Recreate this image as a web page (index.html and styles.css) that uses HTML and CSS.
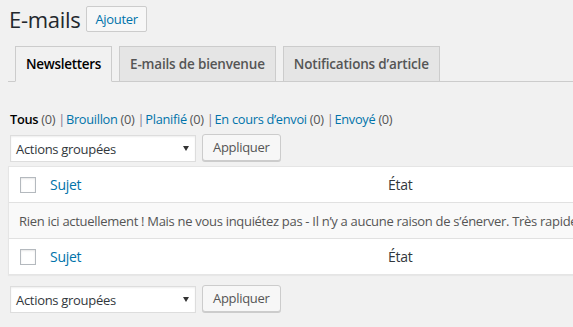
FILE: index.html
```html
<!DOCTYPE html>
<html lang="fr">
<head>
<meta charset="utf-8">
<title>E-mails</title>
<link rel="stylesheet" href="styles.css">
</head>
<body>
<div class="wrap">
  <div class="head">
    <h1 class="title">E-mails</h1>
    <a class="add-btn" href="#">Ajouter</a>
  </div>
  <nav class="tabs">
    <a class="tab active" href="#">Newsletters</a>
    <a class="tab" href="#">E-mails de bienvenue</a>
    <a class="tab" href="#">Notifications d’article</a>
  </nav>
  <ul class="filters">
    <li><a class="current" href="#">Tous</a> <span class="count">(0)</span> <span class="sep">|</span></li>
    <li><a href="#">Brouillon</a> <span class="count">(0)</span> <span class="sep">|</span></li>
    <li><a href="#">Planifié</a> <span class="count">(0)</span> <span class="sep">|</span></li>
    <li><a href="#">En cours d’envoi</a> <span class="count">(0)</span> <span class="sep">|</span></li>
    <li><a href="#">Envoyé</a> <span class="count">(0)</span></li>
  </ul>
  <div class="tablenav top">
    <div class="select"><span>Actions groupées</span><i class="arrow"></i></div>
    <button class="btn">Appliquer</button>
  </div>
  <div class="table">
    <div class="row head-row">
      <div class="cb"><span class="checkbox"></span></div>
      <div class="col-subject"><a href="#">Sujet</a></div>
      <div class="col-state">État</div>
    </div>
    <div class="row empty-row">
      <div class="empty">Rien ici actuellement ! Mais ne vous inquiétez pas - Il n’y a aucune raison de s’énerver. Très rapidement, de nouveaux éléments apparaîtront ici.</div>
    </div>
    <div class="row foot-row">
      <div class="cb"><span class="checkbox"></span></div>
      <div class="col-subject"><a href="#">Sujet</a></div>
      <div class="col-state">État</div>
    </div>
  </div>
  <div class="tablenav bottom">
    <div class="select"><span>Actions groupées</span><i class="arrow"></i></div>
    <button class="btn">Appliquer</button>
  </div>
</div>
</body>
</html>
```

FILE: styles.css
```css
html, body {
  margin: 0;
  padding: 0;
  overflow: hidden;
  background: #f1f1f1;
}
body {
  font-family: "Open Sans", "Noto Sans", sans-serif;
  font-size: 13px;
  letter-spacing: -0.3px;
  color: #444;
}
a {
  text-decoration: none;
  color: #0073aa;
}
.wrap {
  padding-left: 8px;
}
.head {
  display: flex;
  align-items: flex-start;
  padding-top: 6px;
  gap: 6px;
}
.title {
  margin: 0;
  padding-left: 1px;
  font-size: 22px;
  font-weight: 400;
  line-height: 26px;
  color: #23282d;
}
.add-btn {
  display: block;
  height: 24px;
  line-height: 24px;
  padding: 0 8px;
  border: 1px solid #ccc;
  border-radius: 2px;
  background: #f7f7f7;
  font-size: 13px;
  color: #0073aa;
}
.tabs {
  display: flex;
  align-items: flex-end;
  gap: 7px;
  margin-top: 14px;
  padding-left: 7px;
  border-bottom: 1px solid #ccc;
}
.tab {
  display: block;
  padding: 5px 10px;
  border: 1px solid #ccc;
  border-bottom: none;
  background: #e5e5e5;
  color: #555;
  font-size: 13.5px;
  font-weight: 600;
  line-height: 24px;
  letter-spacing: -0.18px;
}
.tab.active {
  background: #f1f1f1;
  color: #000;
  margin-bottom: -1px;
  border-bottom: 1px solid #f1f1f1;
  letter-spacing: -0.3px;
}
.filters {
  display: flex;
  list-style: none;
  margin: 29px 0 0 2px;
  padding: 0;
  line-height: 16px;
  color: #555;
  font-size: 12.8px;
}
.filters li {
  white-space: pre;
}
.filters .sep {
  color: #7c7490;
  padding-right: 1px;
}
.filters .current {
  color: #000;
  font-weight: 600;
}
.tablenav {
  display: flex;
  align-items: flex-start;
  gap: 6px;
  padding-left: 2px;
}
.tablenav.top {
  margin-top: 8px;
}
.tablenav.bottom {
  margin-top: 11px;
}
.select {
  box-sizing: border-box;
  width: 186px;
  height: 27px;
  display: flex;
  align-items: center;
  justify-content: space-between;
  padding: 0 6px 0 5px;
  border: 1px solid #ddd;
  background: #fff;
  box-shadow: inset 0 1px 2px rgba(0,0,0,.07);
  color: #32373c;
  font-size: 13px;
}
.arrow {
  width: 0;
  height: 0;
  border-left: 3px solid transparent;
  border-right: 3px solid transparent;
  border-top: 5px solid #333;
}
.btn {
  box-sizing: border-box;
  height: 27px;
  padding: 0 10px;
  border: 1px solid #ccc;
  border-radius: 3px;
  background: #f7f7f7;
  box-shadow: 0 1px 0 #ccc;
  color: #555;
  font-family: inherit;
  letter-spacing: inherit;
  font-size: 13px;
  line-height: 25px;
  margin-top: -1px;
}
.table {
  width: 900px;
  margin-top: 4px;
  background: #fff;
  border: 1px solid #e5e5e5;
  box-shadow: 0 1px 1px rgba(0,0,0,.04);
}
.row {
  display: flex;
  align-items: center;
  height: 35px;
}
.head-row {
  border-bottom: 1px solid #e1e1e1;
}
.empty-row {
  background: #f9f9f9;
  border-bottom: 1px solid #e1e1e1;
}
.cb {
  width: 41px;
  display: flex;
  padding-left: 11px;
  box-sizing: border-box;
}
.checkbox {
  box-sizing: border-box;
  width: 16px;
  height: 16px;
  border: 1px solid #b4b9be;
  background: #fff;
  box-shadow: inset 0 1px 2px rgba(0,0,0,.1);
}
.col-subject {
  width: 338px;
  font-size: 14px;
}
.col-state {
  font-size: 14px;
  color: #32373c;
}
.empty {
  padding-left: 10px;
  white-space: nowrap;
  color: #555;
  font-size: 13px;
}
```
